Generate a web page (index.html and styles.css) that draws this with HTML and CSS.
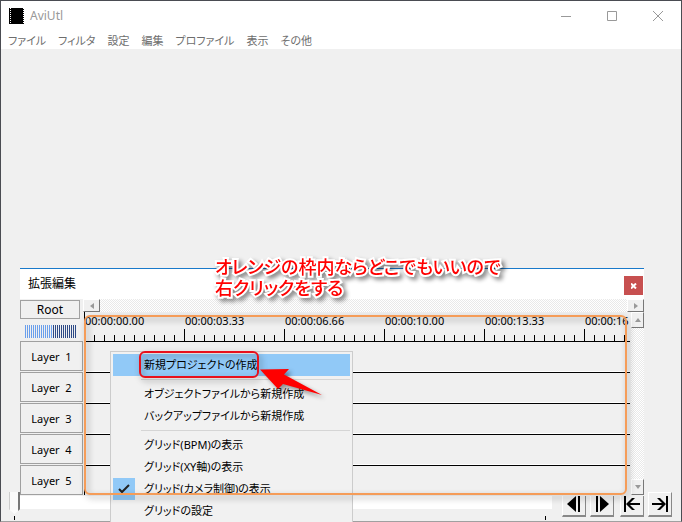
FILE: index.html
```html
<!DOCTYPE html>
<html lang="ja">
	<head>
		<meta charset="UTF-8">
		<title>AviUtl</title>
		<link rel="stylesheet" href="styles.css">
	</head>
	<body>
		<div class="app">
			<div class="titlebar">
				<svg class="film" width="15" height="16" viewBox="0 0 15 16">
					<rect width="15" height="16" fill="#000"/>
					<path d="M1.5 0V16M14.5 0V16" stroke="#fff" stroke-dasharray="1 1"/>
				</svg>
				<h1>AviUtl</h1>
				<div class="winBtns">
					<button aria-label="最小化"><svg width="10" height="10"><path d="M0 5.5H10"/></svg></button>
					<button aria-label="最大化"><svg width="10" height="10"><path d="M.5 .5H9.5V9.5H.5Z"/></svg></button>
					<button aria-label="閉じる"><svg width="10" height="10"><path d="M0 0L10 10M10 0L0 10"/></svg></button>
				</div>
			</div>
			<nav class="menubar">
				<a href="#">ファイル</a>
				<a href="#">フィルタ</a>
				<a href="#">設定</a>
				<a href="#">編集</a>
				<a href="#">プロファイル</a>
				<a href="#">表示</a>
				<a href="#">その他</a>
			</nav>
			<div class="preview"></div>
			<div class="footer">
				<div class="seek">
					<input type="range" min="0" max="100" value="0" aria-label="フレーム位置">
				</div>
				<div class="steps">
					<button aria-label="前のフレーム"><svg width="22" height="22"><path d="M4 11L13 3V19Z"/><path d="M15 3h2v16h-2z"/></svg></button>
					<button aria-label="次のフレーム"><svg width="22" height="22"><path d="M5 3h2v16H5z"/><path d="M9 3L18 11L9 19Z"/></svg></button>
				</div>
				<div class="steps">
					<button aria-label="先頭へ"><svg width="22" height="22"><path d="M3 3h2v16H3z"/><path d="M5 11l6-6h3l-5 5h10v2H9l5 5h-3z"/></svg></button>
					<button aria-label="最後へ"><svg width="22" height="22"><path d="M17 3h2v16h-2z"/><path d="M17 11l-6-6H8l5 5H3v2h10l-5 5h3z"/></svg></button>
				</div>
			</div>
		</div>

		<!-- 拡張編集 -->
		<div class="editor">
			<div class="editorTitle">
				<h2>拡張編集</h2>
				<button class="closeBtn" aria-label="閉じる"><svg width="6" height="6"><path d="M0 .5L5 5.5M5 .5L0 5.5"/></svg></button>
			</div>
			<div class="editorBody">
				<div class="side">
					<button class="root">Root</button>
					<div class="zoomBar"></div>
					<button class="layer">Layer&nbsp; 1</button>
					<button class="layer">Layer&nbsp; 2</button>
					<button class="layer">Layer&nbsp; 3</button>
					<button class="layer">Layer&nbsp; 4</button>
					<button class="layer">Layer&nbsp; 5</button>
				</div>
				<div class="main">
					<div class="hscroll">
						<button aria-label="左へ"><svg width="4" height="6"><path d="M4 0V6L0 3Z"/></svg></button>
						<button aria-label="右へ"><svg width="4" height="6"><path d="M0 0V6L4 3Z"/></svg></button>
					</div>
					<div class="work">
						<div class="timeline">
							<div class="ruler">
								<span>00:00:00.00</span>
								<span>00:00:03.33</span>
								<span>00:00:06.66</span>
								<span>00:00:10.00</span>
								<span>00:00:13.33</span>
								<span>00:00:16</span>
							</div>
							<div class="track"></div>
							<div class="track"></div>
							<div class="track"></div>
							<div class="track"></div>
							<div class="track"></div>
						</div>
						<div class="vscroll">
							<button aria-label="上へ"><svg width="6" height="4"><path d="M0 4H6L3 0Z"/></svg></button>
							<button aria-label="下へ"><svg width="6" height="4"><path d="M0 0H6L3 4Z"/></svg></button>
						</div>
					</div>
				</div>
			</div>
		</div>

		<div class="popup">
			<button class="item on">新規プロジェクトの作成</button>
			<hr>
			<button class="item">オブジェクトファイルから新規作成</button>
			<button class="item">バックアップファイルから新規作成</button>
			<hr>
			<button class="item">グリッド(BPM)の表示</button>
			<button class="item">グリッド(XY軸)の表示</button>
			<button class="item checked"><span class="check"><svg width="12" height="10"><path d="M1 5L4 8L11 1"/></svg></span>グリッド(カメラ制御)の表示</button>
			<button class="item">グリッドの設定</button>
		</div>

		<!-- 説明用の注釈 -->
		<div class="orangeFrame"></div>
		<div class="redFrame"></div>
		<svg class="arrow" width="66" height="32" viewBox="0 0 66 32">
			<path d="M1 3.5L30 3L25 8.5L63 29L24 18L19 23Z"/>
		</svg>
		<p class="note">オレンジの枠内ならどこでもいいので<br>右クリックをする</p>
	</body>
</html>
```
FILE: styles.css
```css
*{
	padding: 0;
	margin: 0;
	box-sizing: border-box;
}
body{
	height: 100vh;
	overflow: hidden;
	position: relative;
	background: #444b55;
	font: 12px/16px "Noto Sans", "Noto Sans CJK JP", sans-serif;
	font-feature-settings: "palt";
	color: #000;
}
button{
	font: inherit;
	font-feature-settings: inherit;
	color: inherit;
	border: 0;
	background: none;
}
svg{
	display: block;
}
.app{
	height: 100vh;
	display: flex;
	flex-direction: column;
	background: #f0f0f0;
	border: 1px solid #4a4c52;
	border-bottom-color: #a0a0a0;
}
.titlebar{
	display: flex;
	align-items: center;
	height: 30px;
	padding-left: 8px;
	background: #fff;
}
.titlebar h1{
	flex: 1;
	padding-left: 6px;
	font-size: 12px;
	font-weight: normal;
	color: #999;
}
.winBtns{
	display: flex;
}
.winBtns button{
	display: grid;
	place-items: center;
	width: 46px;
	height: 30px;
}
.winBtns path{
	fill: none;
	stroke: #999;
}
.menubar{
	display: flex;
	gap: 12px;
	height: 18px;
	padding: 1px 0 0 7px;
	font-size: 11px;
	line-height: 18px;
	background: #fff;
}
.menubar a{
	color: #6d6d6d;
	text-decoration: none;
	white-space: nowrap;
}
.preview{
	flex: 1;
}
.footer{
	display: flex;
	gap: 6px;
	height: 29px;
	padding: 0 9px 4px 8px;
}
.seek{
	flex: 1;
	height: 29px;
	margin-right: 4px;
	background: linear-gradient(#000, #000) 5px 24px/1px 4px no-repeat, linear-gradient(#000, #000) calc(100% - 6px) 24px/1px 4px no-repeat;
}
.seek input{
	display: block;
	width: 100%;
	height: 22px;
	appearance: none;
	background: linear-gradient(#fff, #fff) 11px 0/100% 17px no-repeat;
}
.seek input::-webkit-slider-thumb{
	appearance: none;
	width: 11px;
	height: 22px;
	background: linear-gradient(90deg, #ccc 1px, #fafafa 1px 9px, #777 9px);
	clip-path: polygon(0 0, 100% 0, 100% 78%, 50% 100%, 0 78%);
}
.steps{
	display: flex;
	gap: 4px;
}
.steps button{
	width: 24px;
	height: 25px;
	border: 1px solid #fff;
	border-right-color: #888;
	border-bottom: 2px solid #888;
}

.editor{
	position: absolute;
	left: 20px;
	right: 38px;
	top: 268px;
	background: #f0f0f0;
	border-top: 1px solid #1979ca;
}
.editorTitle{
	display: flex;
	justify-content: space-between;
	height: 30px;
	padding: 7px 1px 0 8px;
	background: #fff;
}
.editorTitle h2{
	font-size: 12px;
	font-weight: normal;
}
.closeBtn{
	display: grid;
	place-items: center;
	width: 19px;
	height: 19px;
	background: #c75050;
}
.closeBtn path{
	stroke: #fff;
	stroke-width: 2;
}
.editorBody{
	display: flex;
}
.side{
	width: 63px;
	padding-top: 1px;
}
.side button{
	display: block;
	border: 1px solid #a0a0a0;
}
.side .root{
	width: 60px;
	height: 19px;
	line-height: 17px;
}
.zoomBar{
	width: 51px;
	height: 13px;
	margin: 6px 5px 3px;
	background: repeating-linear-gradient(90deg, transparent 0 1px, #f0f0f0 1px 2px), linear-gradient(90deg, #6a9fec 28px, #2d4a87 28px);
}
.side .layer{
	width: 63px;
	height: 30px;
	margin-bottom: 1px;
	padding-top: 2px;
	font-size: 11px;
}
.main{
	flex: 1;
	min-width: 0;
}
.hscroll, .vscroll{
	display: flex;
	justify-content: space-between;
	background: repeating-conic-gradient(#fff 0 25%, #e9e9e9 0 50%) 0 0/2px 2px;
}
.vscroll{
	flex-direction: column;
	width: 13px;
}
.hscroll button, .vscroll button{
	display: grid;
	place-items: center;
	width: 17px;
	height: 13px;
	background: #f0f0f0;
	border: 1px solid #fff;
	border-right-color: #777;
	border-bottom-color: #777;
}
.vscroll button{
	width: 13px;
	height: 16px;
}
.hscroll path, .vscroll path{
	fill: #999;
}
.work{
	display: flex;
	gap: 1px;
	padding-left: 1px;
}
.timeline{
	flex: 1;
	min-width: 0;
	border-left: 1px solid #000;
}
.ruler{
	display: flex;
	height: 30px;
	overflow: hidden;
	font-size: 11px;
	line-height: 18px;
	border-bottom: 1px solid #000;
	background: repeating-linear-gradient(90deg, transparent 0 99px, #000 99px 100px) 0 100%/100% 12px no-repeat, repeating-linear-gradient(90deg, transparent 0 9px, #000 9px 10px) 0 100%/100% 6px no-repeat;
}
.ruler span{
	flex: 0 0 100px;
}
.track{
	height: 31px;
	border-bottom: 1px solid #000;
	box-shadow: inset 0 -1px #fff;
}
.track:last-child{
	height: 29px;
	border: 0;
	box-shadow: none;
}

.popup{
	position: absolute;
	left: 110px;
	top: 351px;
	width: 243px;
	padding: 2px;
	font-size: 11px;
	background: #f1f1f1;
	border: 1px solid #ccc;
}
.popup hr{
	height: 1px;
	margin: 3px 0 3px 28px;
	border: 0;
	background: #d5d5d5;
}
.item{
	display: flex;
	align-items: center;
	width: 100%;
	height: 22px;
	padding-left: 31px;
	text-align: left;
	white-space: nowrap;
}
.item.on{
	background: #91c9f7;
}
.item.checked{
	padding-left: 0;
}
.check{
	display: grid;
	place-items: center;
	width: 22px;
	height: 22px;
	margin-right: 9px;
	background: #91c9f7;
}
.check path{
	fill: none;
	stroke: #222;
	stroke-width: 2;
}

.orangeFrame{
	position: absolute;
	left: 84px;
	right: 55px;
	top: 315px;
	height: 180px;
	border: 2px solid #f59c58;
	border-radius: 6px;
	filter: drop-shadow(2px 3px 3px rgba(0,0,0,.35));
}
.redFrame{
	position: absolute;
	left: 139px;
	top: 351px;
	width: 120px;
	height: 27px;
	border: 2px solid #e8101c;
	border-radius: 6px;
	filter: drop-shadow(2px 3px 3px rgba(0,0,0,.4));
}
.arrow{
	position: absolute;
	left: 259px;
	top: 366px;
	overflow: visible;
	filter: drop-shadow(3px 3px 2px rgba(0,0,0,.4));
}
.arrow path{
	fill: #f00;
}
.note{
	position: absolute;
	left: 215px;
	top: 257px;
	font-size: 18px;
	line-height: 21px;
	font-weight: 500;
	white-space: nowrap;
	color: #f00;
	-webkit-text-stroke: 4px #fff;
	paint-order: stroke fill;
	filter: drop-shadow(3px 3px 2px rgba(0,0,0,.45));
}
```
